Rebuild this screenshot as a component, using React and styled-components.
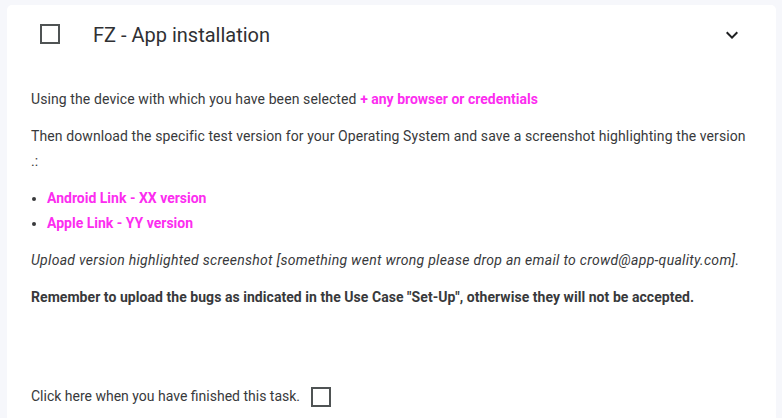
import React from "react";
import styled, { createGlobalStyle } from "styled-components";

const GlobalStyle = createGlobalStyle`
  html, body {
    margin: 0;
    padding: 0;
    background: #f6f7fb;
    font-family: Roboto, "Liberation Sans", Arial, sans-serif;
  }
`;

const Page = styled.div`
  padding: 5px 6px 0 7px;
  height: 413px;
  overflow: hidden;
`;

const Card = styled.section`
  background: #ffffff;
  border-radius: 5px;
  min-height: 420px;
`;

const Header = styled.div`
  display: flex;
  align-items: center;
  height: 58px;
  padding: 0 32px 0 33px;
`;

const Box = styled.span`
  display: inline-block;
  flex: none;
  width: 20px;
  height: 20px;
  box-sizing: border-box;
  border: 2px solid #4f5354;
  margin-left: ${(p) => p.$gap || 0}px;
`;

const Title = styled.h2`
  flex: 1;
  margin: 0 0 0 33px;
  padding-top: 1px;
  font-size: 20px;
  font-weight: 400;
  color: #2f3033;
`;

const Chevron = styled.svg`
  width: 24px;
  height: 24px;
  fill: #1f2022;
  margin-top: 1px;
`;

const Body = styled.div`
  padding: 24px 24px 0 24px;
  font-size: 14px;
  line-height: 25px;
  letter-spacing: 0.1px;
  color: #38393b;
`;

const Para = styled.p`
  margin: 0 0 12px;
  font-style: ${(p) => (p.$italic ? "italic" : "normal")};
  font-weight: ${(p) => (p.$bold ? 700 : 400)};
  letter-spacing: ${(p) => (p.$italic ? "0.3px" : p.$bold ? "0.05px" : "inherit")};
`;

const Link = styled.span`
  color: #fc2df0;
  font-weight: 700;
  letter-spacing: 0;
`;

const List = styled.ul`
  margin: 0 0 12px;
  padding-left: 16px;
`;

const Finish = styled.div`
  display: flex;
  align-items: center;
  margin-top: 74px;
  letter-spacing: 0;
`;

export default function App() {
  return (
    <>
      <GlobalStyle />
      <Page>
        <Card>
          <Header>
            <Box />
            <Title>FZ - App installation</Title>
            <Chevron viewBox="0 0 24 24">
              <path d="M16.59 8.59 12 13.17 7.41 8.59 6 10l6 6 6-6z" />
            </Chevron>
          </Header>
          <Body>
            <Para>
              Using the device with which you have been selected{" "}
              <Link>+ any browser or credentials</Link>
            </Para>
            <Para>
              Then download the specific test version for your Operating System and save a
              screenshot highlighting the version .:
            </Para>
            <List>
              <li>
                <Link>Android Link - XX version</Link>
              </li>
              <li>
                <Link>Apple Link - YY version</Link>
              </li>
            </List>
            <Para $italic>
              Upload version highlighted screenshot [something went wrong please drop an email to
              crowd@app-quality.com].
            </Para>
            <Para $bold>
              Remember to upload the bugs as indicated in the Use Case "Set-Up", otherwise they
              will not be accepted.
            </Para>
            <Finish>
              Click here when you have finished this task.
              <Box $gap={11} />
            </Finish>
          </Body>
        </Card>
      </Page>
    </>
  );
}
